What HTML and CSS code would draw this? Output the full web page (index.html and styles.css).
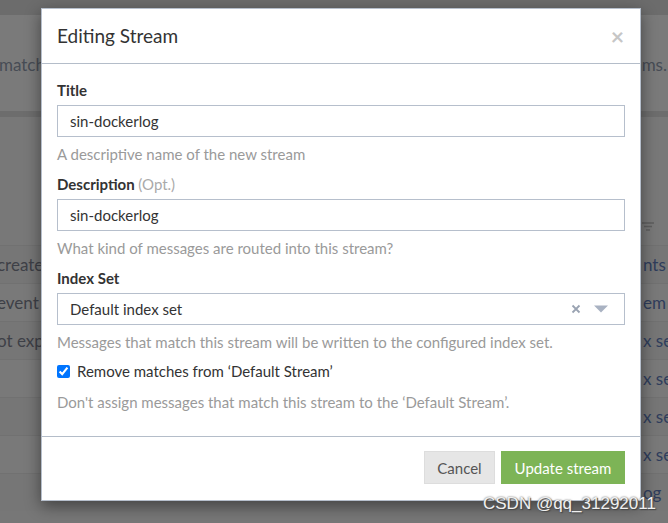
FILE: index.html
```html
<!DOCTYPE html>
<html>
<head>
<meta charset="utf-8">
<link rel="stylesheet" href="styles.css">
</head>
<body>
<div class="page">
  <div class="topband"></div>
  <div class="intro">
    <span class="intro-left">match</span>
    <span class="intro-right">ams.</span>
  </div>
  <div class="divider"></div>
  <div class="gap-area">
    <span class="filter-icon">
      <svg width="12" height="10" viewBox="0 0 12 10"><path d="M0 1h12M2 4.5h8M4 8h4" stroke="#5e5e5e" stroke-width="1.6" fill="none"/></svg>
    </span>
  </div>
  <div class="rows">
    <div class="row"><span class="l">create</span><span class="r">nts</span></div>
    <div class="row alt"><span class="l">event</span><span class="r">em E</span></div>
    <div class="row"><span class="l">ot exp</span><span class="r">x set</span></div>
    <div class="row alt"><span class="l"></span><span class="r">x set</span></div>
    <div class="row"><span class="l"></span><span class="r">x set</span></div>
    <div class="row alt"><span class="l"></span><span class="r">x set</span></div>
    <div class="row"><span class="l"></span><span class="r">og</span></div>
  </div>
</div>

<div class="modal">
  <div class="modal-header">
    <h4 class="modal-title">Editing Stream</h4>
    <span class="close">×</span>
  </div>
  <div class="modal-body">
    <div class="form-group">
      <label class="control-label">Title</label>
      <div class="form-control">sin-dockerlog</div>
      <span class="help-block">A descriptive name of the new stream</span>
    </div>
    <div class="form-group">
      <label class="control-label">Description <span class="opt">(Opt.)</span></label>
      <div class="form-control">sin-dockerlog</div>
      <span class="help-block">What kind of messages are routed into this stream?</span>
    </div>
    <div class="form-group">
      <label class="control-label">Index Set</label>
      <div class="form-control select">
        <span>Default index set</span>
        <span class="select-icons">
          <svg width="10" height="10" viewBox="0 0 10 10"><path d="M1.5 1.5l7 7M8.5 1.5l-7 7" stroke="#9aa3b2" stroke-width="1.8"/></svg>
          <svg width="14" height="8" viewBox="0 0 14 8"><path d="M0 0.5h14L7 7.5z" fill="#a9b2c2"/></svg>
        </span>
      </div>
      <span class="help-block">Messages that match this stream will be written to the configured index set.</span>
    </div>
    <div class="form-group last">
      <div class="checkbox">
        <input type="checkbox" checked>
        <span>Remove matches from ‘Default Stream’</span>
      </div>
      <span class="help-block">Don't assign messages that match this stream to the ‘Default Stream’.</span>
    </div>
  </div>
  <div class="modal-footer">
    <button class="btn btn-default">Cancel</button>
    <button class="btn btn-success">Update stream</button>
  </div>
</div>

<div class="watermark">CSDN @qq_31292011</div>
</body>
</html>
```
FILE: styles.css
```css
* { box-sizing: border-box; }
html, body { margin: 0; padding: 0; }
body {
  width: 668px;
  height: 523px;
  overflow: hidden;
  background: #777777;
  font-family: Lato, "Liberation Sans", sans-serif;
  position: relative;
}
.page { display: flex; flex-direction: column; }
.topband { height: 15px; background: #6c6c6c; }
.intro {
  height: 96px;
  background: #7a7a7a;
  display: flex;
  justify-content: space-between;
  align-items: center;
  font-size: 17px;
  color: #474c55;
  padding-top: 2px;
}
.intro-left { margin-left: -1px; }
.intro-right { margin-right: 1px; }
.divider { height: 6px; background: #6d6d6d; }
.gap-area {
  height: 128px;
  background: #787878;
  display: flex;
  justify-content: flex-end;
  align-items: flex-end;
  padding: 0 14px 10px 0;
}
.rows { display: flex; flex-direction: column; }
.row {
  height: 38px;
  display: flex;
  justify-content: space-between;
  align-items: center;
  font-size: 17px;
  background: #767676;
  border-top: 1px solid #717171;
}
.row.alt { background: #797979; }
.row .l { color: #3e4047; margin-left: -3px; }
.row .r { color: #2f3d5c; width: 25px; white-space: nowrap; overflow: hidden; }

.modal {
  position: absolute;
  left: 41px;
  top: 8px;
  width: 600px;
  background: #fff;
  border: 1px solid #b6bfcc;
  box-shadow: 0 5px 15px rgba(0, 0, 0, 0.45);
  color: #333;
}
.modal-header {
  height: 55px;
  padding: 14px 15px;
  border-bottom: 1px solid #b4bdc9;
  display: flex;
  justify-content: space-between;
  align-items: center;
}
.modal-title {
  margin: 0;
  font-size: 19px;
  line-height: 26px;
  font-weight: 400;
  color: #333;
}
.close {
  font-size: 23px;
  color: #c6c6c6;
  line-height: 1;
  margin-right: 1px;
  font-weight: 700;
}
.modal-body { padding: 16px 15px 14px; }
.form-group { margin-bottom: 10px; display: flex; flex-direction: column; }
.control-label {
  font-size: 15px;
  line-height: 20px;
  font-weight: 700;
  color: #333;
  margin-bottom: 5px;
}
.opt { font-weight: 400; color: #aaa; }
.form-control {
  height: 32px;
  border: 1px solid #b6bfcc;
  padding: 0 12px;
  font-size: 15px;
  line-height: 30px;
  color: #333;
}
.select { display: flex; justify-content: space-between; align-items: center; }
.select-icons { display: flex; align-items: center; gap: 13px; margin-right: 4px; }
.help-block {
  margin-top: 7px;
  font-size: 15px;
  line-height: 20px;
  color: #9a9a9a;
}
.form-group.last { margin-top: -1px; }
.checkbox {
  display: flex;
  align-items: center;
  gap: 7px;
  height: 20px;
  font-size: 15px;
  color: #333;
}
.checkbox input { margin: 0; width: 13px; height: 13px; }
.checkbox + .help-block { margin-top: 11px; }
.modal-footer {
  border-top: 1px solid #b4bdc9;
  padding: 14px 15px 16px;
  display: flex;
  justify-content: flex-end;
  gap: 6px;
}
.btn {
  height: 33px;
  font-family: inherit;
  font-size: 15px;
  padding: 0 10px;
  border-radius: 0;
  cursor: pointer;
}
.btn-default { background: #e6e6e6; border: 1px solid #dddddd; color: #555; width: 71px; }
.btn-success { background: #7db456; border: 1px solid #7db456; color: #fff; width: 124px; }
.watermark {
  position: absolute;
  left: 483px;
  top: 494px;
  font-family: "Liberation Sans", Arial, sans-serif;
  font-size: 17px;
  color: #f0f0f0;
  text-shadow: 0 0 2px #555, 1px 1px 1px #444;
}
```
